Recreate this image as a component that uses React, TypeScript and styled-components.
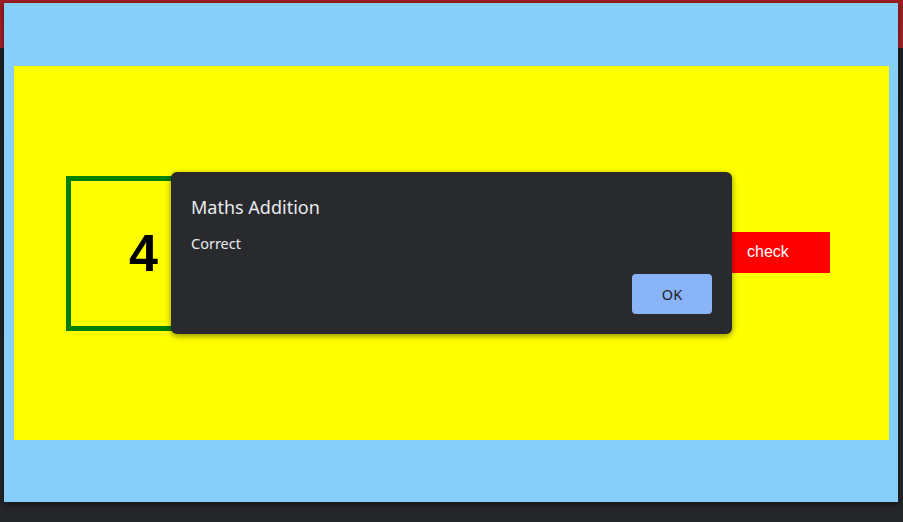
import React from "react";
import styled, { createGlobalStyle } from "styled-components";

const Global = createGlobalStyle`
  html, body { margin: 0; padding: 0; }
  body {
    width: 903px;
    height: 522px;
    overflow: hidden;
    background: #28292d;
    font-family: "Liberation Sans", Arial, sans-serif;
  }
`;

const Backdrop = styled.div`
  position: relative;
  width: 903px;
  height: 522px;
  box-sizing: border-box;
  padding: 3px 5px 20px 4px;
  background: linear-gradient(to bottom, #9e1c22 0, #a3232a 48px, #1f2023 48px, #25262a 100%);
`;

const Panel = styled.div`
  box-sizing: border-box;
  width: 894px;
  height: 499px;
  padding: 63px 9px 62px 10px;
  background: #87cefa;
  box-shadow: 0 2px 6px rgba(0, 0, 0, 0.5);
`;

const Board = styled.div`
  box-sizing: border-box;
  height: 374px;
  background: #ffff00;
  display: flex;
  align-items: center;
  padding: 0 59px 0 52px;
`;

const NumberBox = styled.div`
  box-sizing: border-box;
  width: 155px;
  height: 155px;
  border: 5px solid #008000;
  display: flex;
  align-items: center;
  justify-content: center;
  font-family: "Liberation Sans", Arial, sans-serif;
  font-weight: bold;
  font-size: 52px;
  color: #000;
`;

const Spacer = styled.div`
  flex: 1;
`;

const CheckButton = styled.button`
  box-sizing: border-box;
  width: 98px;
  height: 41px;
  margin-top: -2px;
  padding: 0 0 0 15px;
  border: none;
  background: #ff0000;
  color: #fff;
  text-align: left;
  font-family: "Liberation Sans", Arial, sans-serif;
  font-size: 16px;
`;

const Dialog = styled.div`
  position: absolute;
  left: 171px;
  top: 172px;
  box-sizing: border-box;
  width: 561px;
  height: 162px;
  padding: 23px 20px 20px 20px;
  background: #292a2d;
  border-radius: 6px;
  box-shadow: 0 2px 6px rgba(0, 0, 0, 0.45);
  display: flex;
  flex-direction: column;
  color: #e8eaed;
  font-family: "Noto Sans", "Open Sans", sans-serif;
`;

const Title = styled.div`
  font-size: 18px;
  line-height: 24px;
  color: #e8eaed;
`;

const Message = styled.div`
  margin-top: 14px;
  font-size: 14.5px;
  line-height: 20px;
  color: #e8eaed;
`;

const Actions = styled.div`
  margin-top: auto;
  display: flex;
  justify-content: flex-end;
`;

const OkButton = styled.button`
  width: 80px;
  height: 40px;
  border: none;
  border-radius: 4px;
  background: #8ab4f8;
  color: #202124;
  font-family: "Noto Sans", "Open Sans", sans-serif;
  font-size: 14.5px;
`;

export default function App() {
  return (
    <>
      <Global />
      <Backdrop>
        <Panel>
          <Board>
            <NumberBox>4</NumberBox>
            <Spacer />
            <CheckButton>check</CheckButton>
          </Board>
        </Panel>
        <Dialog>
          <Title>Maths Addition</Title>
          <Message>Correct</Message>
          <Actions>
            <OkButton>OK</OkButton>
          </Actions>
        </Dialog>
      </Backdrop>
    </>
  );
}
